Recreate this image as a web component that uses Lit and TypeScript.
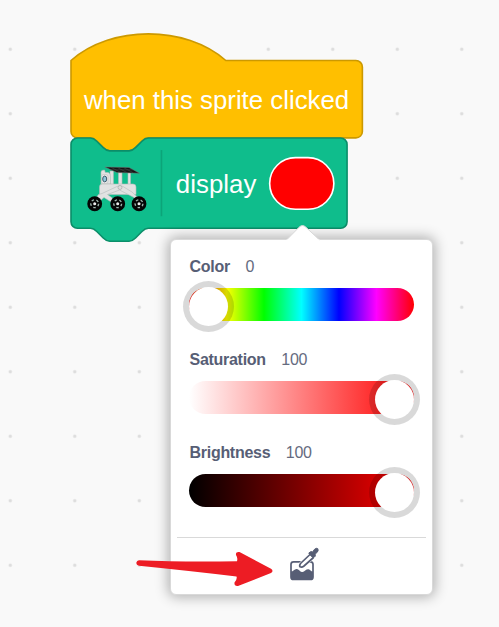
import { LitElement, html, svg, css } from "lit";
import { customElement, property } from "lit/decorators.js";

const NOTCH = "c2,0 3,1 4,2 l4,4 c1,1 2,2 4,2 h12 c2,0 3,-1 4,-2 l4,-4 c1,-1 2,-2 4,-2";
const NOTCH_BACK = "c-2,0 -3,1 -4,2 l-4,4 c-1,1 -2,2 -4,2 h-12 c-2,0 -3,-1 -4,-2 l-4,-4 c-1,-1 -2,-2 -4,-2";

@customElement("color-slider")
class ColorSlider extends LitElement {
  @property() label = "";
  @property({ type: Number }) value = 0;
  @property() kind = "hue";

  static styles = css`
    :host { display: block; height: 93px; color: #575e75; }
    .head { display: flex; gap: 15.5px; height: 20px; line-height: 20px; font-size: 16px; letter-spacing: -0.28px; padding-left: 0.5px; }
    .name { font-weight: 700; }
    .value { color: #656b80; }
    .track { display: flex; align-items: center; height: 33px; margin-top: 11px; border-radius: 17px; }
    .hue { background: linear-gradient(to right, #f00 0%, #ff0 16.67%, #0f0 33.33%, #0ff 50%, #00f 66.67%, #f0f 83.33%, #f00 100%); }
    .saturation { background: linear-gradient(to right, #fff, #f00); justify-content: flex-end; }
    .brightness { background: linear-gradient(to right, #000, #f00); justify-content: flex-end; }
    .handle { width: 39px; height: 39px; flex: none; border-radius: 50%; background: #fff; box-shadow: 0 0 0 6px rgba(0, 0, 0, 0.15); margin-top: 4px; }
  `;

  render() {
    return html`
      <div class="head"><span class="name">${this.label}</span><span class="value">${this.value}</span></div>
      <div class="track ${this.kind}"><div class="handle"></div></div>
    `;
  }
}

@customElement("app-root")
class AppRoot extends LitElement {
  static styles = css`
    :host { display: block; position: relative; width: 499px; height: 627px; overflow: hidden; background: #f9f9f9; font-family: "Liberation Sans", Arial, sans-serif; }
    .workspace, .arrow { position: absolute; inset: 0; display: block; }
    .block-text { font-size: 16px; fill: #fff; }
    .popup { position: absolute; left: 170px; top: 239px; width: 263px; height: 356px; box-sizing: border-box; border: 1px solid #d9d9d9; border-radius: 6px; background: #fff; box-shadow: 0 0 13px 2px rgba(0, 0, 0, 0.3); display: flex; flex-direction: column; }
    .tip { position: absolute; left: 114px; top: -17px; display: block; }
    .sliders { padding: 17px 18px 0; height: 280px; box-sizing: border-box; }
    .footer { margin: 17px 6px 0; border-top: 1px solid #d9d9d9; display: flex; justify-content: center; padding-top: 8px; }
    .picker { display: block; margin-left: 4px; }
  `;

  wheel(cx: number) {
    return svg`
      <ellipse cx=${cx} cy="203.7" rx="7.4" ry="7.5" fill="#050505"/>
      <circle cx=${cx} cy="203.7" r="3.9" fill="none" stroke="#9db5ad" stroke-width="1.4" stroke-dasharray="2.5 2.4"/>
      <circle cx=${cx} cy="203.7" r="1.5" fill="#eee"/>`;
  }

  rover() {
    return svg`
      <g stroke="#b4bcba" stroke-width=".6" fill="#e2e2e2" stroke-linejoin="round">
        <path d="M110 171h3.400v14H110zM118.500 172h3.500v13h-3.500zM128 172h2.500v13h-2.500z"/>
        <path d="M101 184v-12q0-2 3.500-2l.8 2.500h3q2.200 1 2.200 4v7.500z"/>
        <path d="M102 184h31q3 0 3 3v7.500h-36.500v-7.500q0-3 2.500-3z"/>
        <path d="M93 202l5.500-7.500 3.500-1 15-7q3-1.800 6 0l9 5.500 7 6.500 2 5-4-1-3-5-14.500-7.500-12 4.500 7.500 5.500-3 2.500-8-5-7.500 6.500z"/>
      </g>
      <circle cx="120" cy="187.500" r="2" fill="#ddd" stroke="#a2a2a2" stroke-width=".6"/>
      <rect x="101.500" y="174.500" width="6.500" height="9" rx="2" fill="#e8e8e8" stroke="#bbb" stroke-width=".5"/>
      <ellipse cx="104.700" cy="179" rx="2" ry="2.900" fill="#91c5db" stroke="#3d5c69"/>
      <path d="M105 167l24 .5 10.500 5.700-22.500-.6z" fill="#141414" stroke="#777" stroke-width=".5"/>
      <path d="M111 167.300l10 5.300M117 167.300l10 5.300M123 167.300l10 5.300M110 169.800h23" stroke="#4c524f" stroke-width=".5"/>
      ${this.wheel(94.7)}${this.wheel(117.7)}${this.wheel(139)}`;
  }

  render() {
    return html`
      <svg class="workspace" width="499" height="627">
        <defs>
          <pattern id="dots" x="-22" y="17" width="64.5" height="64.5" patternUnits="userSpaceOnUse">
            <circle cx="32.300" cy="32.300" r="1.700" fill="#ddd"/>
          </pattern>
        </defs>
        <rect width="499" height="627" fill="url(#dots)"/>
        <g transform="translate(71 60.5) scale(1.6125)">
          <path d="M0,0 c25,-22 71,-22 96,0 H176.700 a4,4 0 0 1 4,4 V44 a4,4 0 0 1 -4,4 H48 ${NOTCH_BACK} H4 a4,4 0 0 1 -4,-4 z" fill="#ffbf00" stroke="#cc9900"/>
          <text class="block-text" x="8" y="30.100" textLength="164.500">when this sprite clicked</text>
        </g>
        <g transform="translate(71 138) scale(1.6125)">
          <path d="M0,4 a4,4 0 0 1 4,-4 H12 ${NOTCH} H167.200 a4,4 0 0 1 4,4 V52 a4,4 0 0 1 -4,4 H48 ${NOTCH_BACK} H4 a4,4 0 0 1 -4,-4 z" fill="#0fbd8c" stroke="#0b8e69"/>
          <path d="M56.100,7.500 V48.500" stroke="#0ca479"/>
          <text class="block-text" x="65" y="34" textLength="50">display</text>
          <rect x="123.200" y="12.200" width="39.800" height="32" rx="16" fill="#f00" stroke="#fff"/>
        </g>
        ${this.rover()}
      </svg>
      <div class="popup">
        <svg class="tip" width="36" height="19">
          <path d="M1.500 17L14 4.300Q17.500 .8 21 4.300L34.500 17" fill="#fff" stroke="#d9d9d9"/>
          <path d="M1.500 16.500h33V19h-33z" fill="#fff"/>
        </svg>
        <div class="sliders">
          <color-slider label="Color" .value=${0} kind="hue"></color-slider>
          <color-slider label="Saturation" .value=${100} kind="saturation"></color-slider>
          <color-slider label="Brightness" .value=${100} kind="brightness"></color-slider>
        </div>
        <div class="footer">
          <svg class="picker" width="32" height="36" viewBox="288 546 32 36">
            <rect x="291" y="561.800" width="22" height="17.700" rx="2.500" fill="#fff" stroke="#575e75" stroke-width="1.700"/>
            <path d="M291 571.500c2.500 0 3.500-3 6-2.500s3.500 3.500 5.500 3 3.500-3 6-2.800c2 .5 2 2 4.500 2.300v6.500q0 2-2 2h-18q-2 0-2-2z" fill="#575e75"/>
            <path d="M310 554.500l-9 8.500q-2 2-1 3.800 2 .7 4-.8l9.500-8.500z" fill="#fff" stroke="#fff" stroke-width="2.600"/>
            <path d="M310 554.500l-9 8.500q-2 2-1 3.800 2 .7 4-.8l9.500-8.500" fill="#fff" stroke="#575e75" stroke-width="1.700"/>
            <path d="M309 552.800l2-1.200 1.700.4 1.600-2.500q2.200-2 3.500-.8 1 1.500-.5 3.500l-2.200 1.900.2 2-1.500 1.500-1.300-.3-3.500-3.500z" fill="#575e75" stroke="#575e75" stroke-linejoin="round"/>
          </svg>
        </div>
      </div>
      <svg class="arrow" width="499" height="627">
        <path d="M139 560.200Q180 562 237 561.200Q238 558 236 555Q235.500 551.500 239.500 552L271 568.800Q274 571 271 573L238 586Q234 586.500 234.500 582.500Q237.500 579 236.500 576.500Q190 571 139 565.800Q136 565 136.300 562.700Q136.800 560.300 139 560.200Z" fill="#ed1c24"/>
      </svg>
    `;
  }
}
